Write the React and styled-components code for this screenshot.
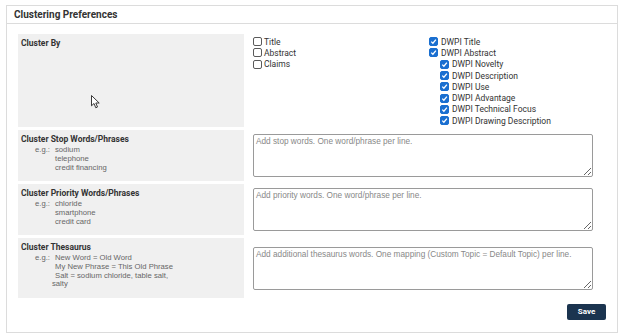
import styled, { createGlobalStyle } from 'styled-components';

const GlobalStyle = createGlobalStyle`
  html, body {
    margin: 0;
    padding: 0;
    background: #fff;
    font-family: Roboto, "Liberation Sans", Arial, sans-serif;
    color: #333;
  }
`;

const Panel = styled.section`
  margin: 5px 6px;
  border: 1px solid #dcdcdc;
  background: #fff;
`;

const Header = styled.header`
  height: 17px;
  display: flex;
  align-items: center;
  padding-left: 7px;
  border-bottom: 1px solid #dcdcdc;
  font-size: 10px;
  font-weight: 700;
  color: #333;
`;

const Body = styled.div`
  padding: 10px 11px 12px;
`;

const Grid = styled.div`
  display: grid;
  grid-template-columns: 226px 1fr;
  column-gap: 9px;
  row-gap: 3px;
`;

const LabelCell = styled.div`
  position: relative;
  background: #f0f0f0;
  padding: 4px 3px 9px;
`;

const LabelTitle = styled.div`
  font-size: 8.5px;
  font-weight: 700;
  line-height: 10px;
  color: #333;
`;

const Examples = styled.div`
  display: flex;
  margin-top: 2px;
  padding-left: 14px;
  font-family: "Liberation Sans", Arial, sans-serif;
  font-size: 7.7px;
  line-height: 8.6px;
  color: #666;
`;

const Eg = styled.span`
  width: 20px;
  flex: none;
`;

const ExampleLines = styled.div`
  display: flex;
  flex-direction: column;
`;

const Wrapped = styled.span`
  margin-left: -3px;
`;

const InputCell = styled.div`
  display: flex;
  align-items: ${(p) => (p.$top ? 'flex-start' : 'center')};
  padding: ${(p) => (p.$top ? '2px 0 1px' : '4px 0')};
`;

const Area = styled.textarea`
  width: 340px;
  height: 43px;
  box-sizing: border-box;
  border: 1px solid #9a9a9a;
  border-radius: 2px;
  padding: 2px 2px;
  margin: 0;
  resize: vertical;
  font-family: "Liberation Sans", Arial, sans-serif;
  font-size: 8.25px;
  line-height: 9px;
  color: #333;

  &::placeholder {
    color: #888;
  }
`;

const Checks = styled.div`
  display: grid;
  grid-template-columns: 176px auto;
`;

const CheckList = styled.div`
  display: flex;
  flex-direction: column;
`;

const CheckRow = styled.label`
  display: flex;
  align-items: center;
  height: 11.3px;
  padding-left: ${(p) => (p.$indent ? 11 : 0)}px;
  font-size: 8.5px;
  color: #333;
  white-space: nowrap;
`;

const Box = styled.span`
  width: 9px;
  height: 9px;
  box-sizing: border-box;
  margin-right: ${(p) => (p.$checked ? 3 : 2)}px;
  border-radius: 2px;
  border: 1px solid ${(p) => (p.$checked ? '#1a6fd0' : '#5a5a5a')};
  background: ${(p) => (p.$checked ? '#1a6fd0' : '#fff')};
  display: inline-flex;
  align-items: center;
  justify-content: center;
  flex: none;
`;

const Cursor = styled.svg`
  position: absolute;
  left: 73px;
  top: 61px;
`;

const Footer = styled.div`
  display: flex;
  justify-content: flex-end;
  margin-top: 6px;
`;

const SaveButton = styled.button`
  width: 39px;
  height: 16px;
  border: none;
  border-radius: 2px;
  background: #1b344f;
  color: #fff;
  font-family: Roboto, sans-serif;
  font-size: 8px;
  font-weight: 700;
  padding: 0;
`;

const Check = ({ label, checked, indent }) => (
  <CheckRow $indent={indent}>
    <Box $checked={checked}>
      {checked && (
        <svg width="7" height="7" viewBox="0 0 10 10">
          <path d="M1.8 5.2 L4.1 7.4 L8.4 2.4" fill="none" stroke="#fff" strokeWidth="1.9" />
        </svg>
      )}
    </Box>
    {label}
  </CheckRow>
);

const plain = ['Title', 'Abstract', 'Claims'];
const dwpi = [
  { label: 'DWPI Title' },
  { label: 'DWPI Abstract' },
  { label: 'DWPI Novelty', indent: true },
  { label: 'DWPI Description', indent: true },
  { label: 'DWPI Use', indent: true },
  { label: 'DWPI Advantage', indent: true },
  { label: 'DWPI Technical Focus', indent: true },
  { label: 'DWPI Drawing Description', indent: true },
];

const ExampleBlock = ({ lines, wrapped }) => (
  <Examples>
    <Eg>e.g.:</Eg>
    <ExampleLines>
      {lines.map((l) => (
        <span key={l}>{l}</span>
      ))}
      {wrapped && <Wrapped>{wrapped}</Wrapped>}
    </ExampleLines>
  </Examples>
);

export default function App() {
  return (
    <>
      <GlobalStyle />
      <Panel>
        <Header>Clustering Preferences</Header>
        <Body>
          <Grid>
            <LabelCell>
              <LabelTitle>Cluster By</LabelTitle>
              <Cursor width="10" height="14" viewBox="0 0 10 14">
                <path
                  d="M0.5 0.5 L0.5 10.8 L3 8.5 L4.8 12.8 L6.5 12 L4.8 8 L8.2 8 Z"
                  fill="#fff"
                  stroke="#222"
                  strokeWidth="0.9"
                  strokeLinejoin="round"
                />
              </Cursor>
            </LabelCell>
            <InputCell $top>
              <Checks>
                <CheckList>
                  {plain.map((p) => (
                    <Check key={p} label={p} />
                  ))}
                </CheckList>
                <CheckList>
                  {dwpi.map((d) => (
                    <Check key={d.label} label={d.label} indent={d.indent} checked />
                  ))}
                </CheckList>
              </Checks>
            </InputCell>

            <LabelCell>
              <LabelTitle>Cluster Stop Words/Phrases</LabelTitle>
              <ExampleBlock lines={['sodium', 'telephone', 'credit financing']} />
            </LabelCell>
            <InputCell>
              <Area placeholder="Add stop words. One word/phrase per line." />
            </InputCell>

            <LabelCell>
              <LabelTitle>Cluster Priority Words/Phrases</LabelTitle>
              <ExampleBlock lines={['chloride', 'smartphone', 'credit card']} />
            </LabelCell>
            <InputCell>
              <Area placeholder="Add priority words. One word/phrase per line." />
            </InputCell>

            <LabelCell>
              <LabelTitle>Cluster Thesaurus</LabelTitle>
              <ExampleBlock
                lines={[
                  'New Word = Old Word',
                  'My New Phrase = This Old Phrase',
                  'Salt = sodium chloride, table salt,',
                ]}
                wrapped="salty"
              />
            </LabelCell>
            <InputCell>
              <Area placeholder="Add additional thesaurus words. One mapping (Custom Topic = Default Topic) per line." />
            </InputCell>
          </Grid>
          <Footer>
            <SaveButton>Save</SaveButton>
          </Footer>
        </Body>
      </Panel>
    </>
  );
}
